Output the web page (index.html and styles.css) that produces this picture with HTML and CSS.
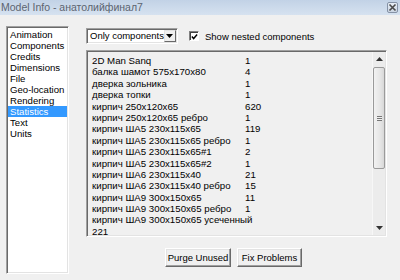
FILE: index.html
```html
<!DOCTYPE html>
<html>
<head>
<meta charset="utf-8">
<link rel="stylesheet" href="styles.css">
</head>
<body>
<div class="window">
  <div class="titlebar">
    <span class="title">Model Info - анатолийфинал7</span>
    <span class="close"><svg width="9" height="9" viewBox="0 0 9 9"><path d="M1.5 1.5 L7.5 7.5 M7.5 1.5 L1.5 7.5" stroke="#4a4a4a" stroke-width="1.6"/></svg></span>
  </div>
  <div class="content">
    <ul class="nav">
      <li>Animation</li>
      <li>Components</li>
      <li>Credits</li>
      <li>Dimensions</li>
      <li>File</li>
      <li>Geo-location</li>
      <li>Rendering</li>
      <li class="selected">Statistics</li>
      <li>Text</li>
      <li>Units</li>
    </ul>
    <div class="main">
      <div class="toolbar">
        <div class="select">
          <span class="select-text">Only components</span>
          <span class="select-btn"><svg width="7" height="4" viewBox="0 0 7 4"><path d="M0 0 H7 L3.5 4 Z" fill="#000"/></svg></span>
        </div>
        <label class="check">
          <span class="box"><svg width="8" height="8" viewBox="0 0 8 8"><path d="M1 3.5 L3 5.8 L7 1.2" fill="none" stroke="#000" stroke-width="1.6"/></svg></span>
          <span class="check-label">Show nested components</span>
        </label>
      </div>
      <div class="list">
        <div class="rows">
          <div class="row"><span class="name">2D Man Sanq</span><span class="count">1</span></div>
          <div class="row"><span class="name">балка шамот 575x170x80</span><span class="count">4</span></div>
          <div class="row"><span class="name">дверка зольника</span><span class="count">1</span></div>
          <div class="row"><span class="name">дверка топки</span><span class="count">1</span></div>
          <div class="row"><span class="name">кирпич 250x120x65</span><span class="count">620</span></div>
          <div class="row"><span class="name">кирпич 250x120x65 ребро</span><span class="count">1</span></div>
          <div class="row"><span class="name">кирпич ШA5 230x115x65</span><span class="count">119</span></div>
          <div class="row"><span class="name">кирпич ШA5 230x115x65 ребро</span><span class="count">1</span></div>
          <div class="row"><span class="name">кирпич ШA5 230x115x65#1</span><span class="count">2</span></div>
          <div class="row"><span class="name">кирпич ШA5 230x115x65#2</span><span class="count">1</span></div>
          <div class="row"><span class="name">кирпич ШA6 230x115x40</span><span class="count">21</span></div>
          <div class="row"><span class="name">кирпич ШA6 230x115x40 ребро</span><span class="count">15</span></div>
          <div class="row"><span class="name">кирпич ШA9 300x150x65</span><span class="count">11</span></div>
          <div class="row"><span class="name">кирпич ШA9 300x150x65 ребро</span><span class="count">1</span></div>
          <div class="row"><span class="name long">кирпич ШA9 300x150x65 усеченный</span></div>
          <div class="row"><span class="name">221</span></div>
        </div>
        <div class="scrollbar">
          <div class="arrow"><svg width="7" height="4" viewBox="0 0 7 4"><path d="M3.5 0 L7 4 H0 Z" fill="#333"/></svg></div>
          <div class="thumb"><span class="grip"></span></div>
          <div class="track"></div>
          <div class="arrow"><svg width="7" height="4" viewBox="0 0 7 4"><path d="M0 0 H7 L3.5 4 Z" fill="#333"/></svg></div>
        </div>
      </div>
      <div class="buttons">
        <button class="btn btn-purge">Purge Unused</button>
        <button class="btn btn-fix">Fix Problems</button>
      </div>
    </div>
  </div>
</div>
</body>
</html>
```
FILE: styles.css
```css
* { box-sizing: border-box; }
html, body {
  margin: 0;
  padding: 0;
  width: 400px;
  height: 280px;
  overflow: hidden;
  background: #f0f0f0;
  font-family: "Liberation Sans", Arial, sans-serif;
  font-size: 9.5px;
  color: #000;
}
.window { width: 400px; height: 280px; }
.titlebar {
  height: 15px;
  background: linear-gradient(#c2d2e6, #d6e2f0);
  display: flex;
  align-items: center;
  justify-content: space-between;
  padding: 0 2px 0 1px;
}
.title {
  font-size: 10.5px;
  color: #5c6470;
  line-height: 15px;
}
.close {
  width: 11px;
  height: 11px;
  border: 1px solid #8592a6;
  border-radius: 2px;
  background: linear-gradient(#e8eef6, #c9d4e2);
  display: flex;
  align-items: center;
  justify-content: center;
}
.content {
  display: flex;
  padding-top: 11px;
}
.nav {
  list-style: none;
  margin: 0 0 0 6px;
  padding: 1px 1px 0 1px;
  width: 63px;
  height: 248px;
  background: #fff;
  border: 1px solid;
  border-color: #a0a0a0 #fff #fff #a0a0a0;
  box-shadow: inset 1px 1px #696969, inset -1px -1px #e3e3e3;
  font-size: 9.6px;
}
.nav li {
  height: 11px;
  line-height: 11px;
  padding-left: 2px;
  white-space: nowrap;
}
.nav li:first-child { margin-top: 1px; }
.nav li.selected {
  background: #3399ff;
  color: #fff;
}
.main {
  margin-left: 17px;
  width: 301px;
  display: flex;
  flex-direction: column;
}
.toolbar {
  margin-top: 2px;
  height: 16px;
  display: flex;
  align-items: center;
  font-size: 9.5px;
}
.select {
  width: 92px;
  height: 16px;
  background: #fff;
  border: 1px solid;
  border-color: #a0a0a0 #fff #fff #a0a0a0;
  box-shadow: inset 1px 1px #696969, inset -1px -1px #e3e3e3;
  display: flex;
  align-items: center;
  padding: 2px 2px 2px 3px;
}
.select-text { flex: 1; line-height: 12px; white-space: nowrap; }
.select-btn {
  flex: none;
  width: 12px;
  height: 12px;
  background: #f0f0f0;
  border: 1px solid;
  border-color: #e3e3e3 #696969 #696969 #e3e3e3;
  display: flex;
  align-items: center;
  justify-content: center;
}
.check {
  display: flex;
  align-items: center;
  margin-left: 11px;
}
.box {
  width: 10px;
  height: 10px;
  background: #fff;
  border: 1px solid;
  border-color: #808080 #fff #fff #808080;
  box-shadow: inset 1px 1px #404040;
  display: flex;
  align-items: center;
  justify-content: center;
  padding-left: 1px;
  padding-top: 1px;
}
.check-label { margin-left: 6px; white-space: nowrap; }
.list {
  margin-top: 6px;
  height: 187px;
  display: flex;
  background: #f0f0f0;
  border: 1px solid;
  border-color: #a0a0a0 #fff #fff #a0a0a0;
  box-shadow: inset 1px 1px #696969, inset -1px -1px #e3e3e3;
  padding: 2px 1px 1px 2px;
}
.rows {
  flex: 1;
  padding: 2px 0 0 3px;
  overflow: visible;
  font-size: 9.7px;
}
.row {
  height: 11.4px;
  line-height: 11.4px;
  display: flex;
  white-space: nowrap;
}
.name { width: 153px; flex: none; }
.name.long { width: auto; }
.count { flex: none; }
.scrollbar {
  width: 13px;
  display: flex;
  flex-direction: column;
  background: #ececec;
  border-left: 1px solid #f7f7f7;
  margin-top: -1px;
}
.arrow {
  height: 14px;
  display: flex;
  align-items: center;
  justify-content: center;
}
.thumb {
  margin: 1px 0 0 0;
  height: 102px;
  border: 1px solid #9a9a9a;
  border-radius: 2px;
  background: linear-gradient(90deg, #f2f2f2, #e6e6e6 60%, #d8d8d8);
  display: flex;
  align-items: center;
  justify-content: center;
}
.grip {
  width: 5px;
  height: 5px;
  border-top: 1px solid #777;
  border-bottom: 1px solid #777;
  background: linear-gradient(#f0f0f0 1px, #777 1px, #777 2px, #f0f0f0 2px);
}
.track { flex: 1; }
.buttons {
  margin-top: 11px;
  display: flex;
  justify-content: center;
  padding-right: 6px;
}
.btn {
  height: 19px;
  font-family: "Liberation Sans", Arial, sans-serif;
  font-size: 9.5px;
  color: #000;
  background: #f0f0f0;
  border: 1px solid;
  border-color: #fff #696969 #696969 #fff;
  box-shadow: inset -1px -1px #a0a0a0, inset 1px 1px #e3e3e3;
  padding: 0;
  margin: 0;
}
.btn-purge { width: 66px; }
.btn-fix { width: 65px; margin-left: 6px; }
```
